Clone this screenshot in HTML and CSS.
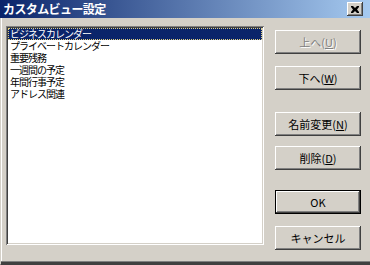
FILE: index.html
```html
<!DOCTYPE html>
<html lang="ja">
<head>
  <meta charset="UTF-8">
  <title>カスタムビュー設定</title>
  <link rel="stylesheet" href="styles.css">
</head>
<body>
  <div class="window">
    <div class="titlebar">
      <span class="title">カスタムビュー設定</span>
      <button class="close-btn" aria-label="閉じる">
        <svg width="8" height="7" viewBox="0 0 8 7">
          <path d="M0 0h2l2 2 2-2h2v1L6 3.5 8 6v1H6L4 5 2 7H0V6l2-2.5L0 1z" fill="#000"/>
        </svg>
      </button>
    </div>

    <div class="content">
      <div class="listbox">
        <div class="item selected">ビジネスカレンダー</div>
        <div class="item">プライベートカレンダー</div>
        <div class="item">重要残務</div>
        <div class="item">一週間の予定</div>
        <div class="item">年間行事予定</div>
        <div class="item">アドレス関連</div>
      </div>

      <div class="buttons">
        <button class="btn disabled btn-up">上へ(<u>U</u>)</button>
        <button class="btn btn-down">下へ(<u>W</u>)</button>
        <button class="btn btn-rename">名前変更(<u>N</u>)</button>
        <button class="btn btn-delete">削除(<u>D</u>)</button>
        <button class="btn default btn-ok">OK</button>
        <button class="btn btn-cancel">キャンセル</button>
      </div>
    </div>
  </div>
</body>
</html>
```

FILE: styles.css
```css
* {
  box-sizing: border-box;
}

body {
  margin: 0;
  width: 370px;
  height: 265px;
  overflow: hidden;
  background: #d4d0c8;
  font-family: "Noto Sans CJK JP", "Noto Sans", sans-serif;
}

.window {
  height: 265px;
  background: #d4d0c8;
  border-left: 1px solid #d4d0c8;
  box-shadow: inset 1px 0 0 #ffffff;
  border-bottom: 1px solid #404040;
  position: relative;
}

.window::after {
  content: "";
  position: absolute;
  left: 0;
  right: 0;
  bottom: 0;
  height: 2px;
  background: #404040;
  border-top: 1px solid #808080;
}

.titlebar {
  height: 18px;
  display: flex;
  align-items: center;
  justify-content: space-between;
  padding: 0 7px 0 3px;
  background: linear-gradient(to right, #0a246a, #a6caf0);
  margin-left: -1px;
}

.title {
  color: #ffffff;
  font-weight: bold;
  font-size: 12px;
  line-height: 18px;
  letter-spacing: -0.6px;
}

.close-btn {
  width: 16px;
  height: 14px;
  padding: 0;
  background: #d4d0c8;
  border: none;
  box-shadow: inset -1px -1px 0 #404040, inset 1px 1px 0 #ffffff, inset -2px -2px 0 #808080;
  display: flex;
  align-items: center;
  justify-content: center;
}

.content {
  display: flex;
  align-items: flex-start;
  padding: 8px 0 0 5px;
}

.listbox {
  width: 258px;
  height: 219px;
  background: #ffffff;
  padding: 2px 2px;
  box-shadow: inset 1px 1px 0 #808080, inset -1px -1px 0 #ffffff,
              inset 2px 2px 0 #404040, inset -2px -2px 0 #d4d0c8;
}

.item {
  font-size: 10px;
  letter-spacing: -1px;
  line-height: 12px;
  height: 12px;
  padding-left: 2px;
  color: #000000;
  white-space: nowrap;
}

.item.selected {
  background: #0a246a;
  color: #ffffff;
  outline: 1px dotted #e0d080;
  outline-offset: -1px;
}

.buttons {
  display: flex;
  flex-direction: column;
  margin-left: 11px;
  margin-top: 4px;
}

.btn {
  width: 86px;
  height: 24px;
  padding: 0;
  background: #d4d0c8;
  border: none;
  font-family: "Noto Sans CJK JP", "Noto Sans", sans-serif;
  font-size: 11px;
  color: #000000;
  box-shadow: inset -1px -1px 0 #404040, inset 1px 1px 0 #ffffff, inset -2px -2px 0 #808080;
}

.btn u {
  text-underline-offset: 1px;
}

.btn.disabled {
  color: #808080;
  text-shadow: 1px 1px 0 #ffffff;
}

.btn.default {
  box-shadow: inset 0 0 0 1px #000000, inset -2px -2px 0 #404040, inset 2px 2px 0 #ffffff, inset -3px -3px 0 #808080;
}

.btn-down { margin-top: 12px; }
.btn-rename { margin-top: 22px; }
.btn-delete { margin-top: 10px; }
.btn-ok { margin-top: 20px; }
.btn-cancel { margin-top: 12px; }
```
